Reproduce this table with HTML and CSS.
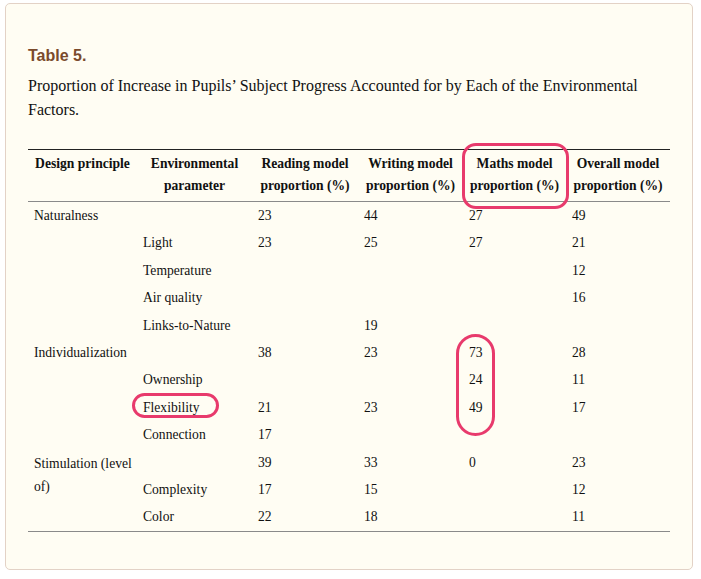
FILE: index.html
```html
<!DOCTYPE html>
<html lang="en">
<head>
<meta charset="utf-8">
<title>Table 5</title>
<link rel="stylesheet" href="styles.css">
</head>
<body>
<div class="card">
  <h3 class="title">Table 5.</h3>
  <p class="caption">Proportion of Increase in Pupils’ Subject Progress Accounted for by Each of the Environmental Factors.</p>
  <table class="data">
    <colgroup>
      <col class="c1"><col class="c2"><col class="c3"><col class="c4"><col class="c5"><col class="c6">
    </colgroup>
    <thead>
      <tr>
        <th>Design principle</th>
        <th>Environmental parameter</th>
        <th>Reading model proportion (%)</th>
        <th>Writing model proportion (%)</th>
        <th>Maths model proportion (%)</th>
        <th>Overall model proportion (%)</th>
      </tr>
    </thead>
    <tbody>
      <tr><td>Naturalness</td><td></td><td>23</td><td>44</td><td>27</td><td>49</td></tr>
      <tr><td></td><td>Light</td><td>23</td><td>25</td><td>27</td><td>21</td></tr>
      <tr><td></td><td>Temperature</td><td></td><td></td><td></td><td>12</td></tr>
      <tr><td></td><td>Air quality</td><td></td><td></td><td></td><td>16</td></tr>
      <tr><td></td><td>Links-to-Nature</td><td></td><td>19</td><td></td><td></td></tr>
      <tr><td>Individualization</td><td></td><td>38</td><td>23</td><td>73</td><td>28</td></tr>
      <tr><td></td><td>Ownership</td><td></td><td></td><td>24</td><td>11</td></tr>
      <tr><td></td><td>Flexibility</td><td>21</td><td>23</td><td>49</td><td>17</td></tr>
      <tr><td></td><td>Connection</td><td>17</td><td></td><td></td><td></td></tr>
      <tr><td rowspan="2" class="wrap">Stimulation (level of)</td><td></td><td>39</td><td>33</td><td>0</td><td>23</td></tr>
      <tr><td>Complexity</td><td>17</td><td>15</td><td></td><td>12</td></tr>
      <tr><td></td><td>Color</td><td>22</td><td>18</td><td></td><td>11</td></tr>
    </tbody>
  </table>
  <div class="mark mark-header"></div>
  <div class="mark mark-column"></div>
  <div class="mark mark-flex"></div>
</div>
</body>
</html>
```

FILE: styles.css
```css
html, body {
  margin: 0;
  padding: 0;
  background: #ffffff;
}

.card {
  position: relative;
  box-sizing: border-box;
  width: 688px;
  height: 567px;
  margin: 3px 0 0 5px;
  padding: 0 22px;
  background: #fffdf3;
  border: 1px solid #e3d2c6;
  border-radius: 5px;
  color: #111111;
}

.title {
  margin: 41.5px 0 0;
  font-family: "Liberation Sans", Arial, sans-serif;
  font-size: 16px;
  font-weight: bold;
  line-height: 20px;
  color: #7a4a2b;
}

.caption {
  margin: 8.8px 0 0;
  font-family: "Liberation Serif", "Times New Roman", serif;
  font-size: 16px;
  line-height: 24px;
}

.data {
  margin-top: 26.7px;
  width: 642px;
  table-layout: fixed;
  border-collapse: collapse;
  font-family: "Liberation Serif", "Times New Roman", serif;
  font-size: 13.6px;
  line-height: 22px;
  border-top: 1px solid #222222;
  border-bottom: 1px solid #8a8a8a;
}

.c1 { width: 109px; }
.c2 { width: 115px; }
.c3 { width: 106px; }
.c4 { width: 105px; }
.c5 { width: 103px; }
.c6 { width: 104px; }

.data th {
  padding: 3px 6px 4px;
  font-weight: bold;
  text-align: center;
  vertical-align: top;
  border-bottom: 1px solid #8a8a8a;
}

.data td {
  padding: 3px 3px 2.4px 6px;
  text-align: left;
  vertical-align: top;
}

.data td.wrap {
  line-height: 23px;
}

.mark {
  position: absolute;
  box-sizing: border-box;
  border: 3px solid #e83a6c;
}

.mark-header {
  left: 456px;
  top: 139px;
  width: 107px;
  height: 66px;
  border-radius: 14px;
}

.mark-column {
  left: 450px;
  top: 330px;
  width: 39px;
  height: 102px;
  border-radius: 20px;
}

.mark-flex {
  left: 126px;
  top: 389px;
  width: 87px;
  height: 25px;
  border-radius: 13px;
}
```
